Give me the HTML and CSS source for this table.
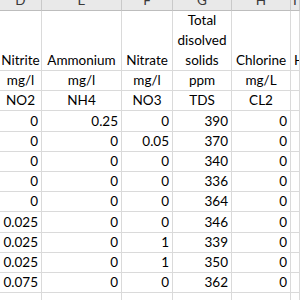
FILE: index.html
```html
<!DOCTYPE html>
<html lang="en">
<head>
    <meta charset="UTF-8">
    <meta name="viewport" content="width=device-width, initial-scale=1.0">
    <title>Water Tests</title>
    <link rel="stylesheet" href="styles.css">
</head>
<body>
    <div class="sheet">
        <!-- column letters -->
        <div class="col-head"><span>D</span></div>
        <div class="col-head"><span>E</span></div>
        <div class="col-head"><span>F</span></div>
        <div class="col-head"><span>G</span></div>
        <div class="col-head"><span>H</span></div>
        <div class="col-head"><span>I</span></div>

        <!-- titles -->
        <div class="cell title">Nitrite</div>
        <div class="cell title">Ammonium</div>
        <div class="cell title">Nitrate</div>
        <div class="cell title">Total disolved solids</div>
        <div class="cell title">Chlorine</div>
        <div class="cell title left">Hardness</div>

        <div class="cell text">mg/l</div>
        <div class="cell text">mg/l</div>
        <div class="cell text">mg/l</div>
        <div class="cell text">ppm</div>
        <div class="cell text">mg/L</div>
        <div class="cell"></div>

        <div class="cell text">NO2</div>
        <div class="cell text">NH4</div>
        <div class="cell text">NO3</div>
        <div class="cell text">TDS</div>
        <div class="cell text">CL2</div>
        <div class="cell"></div>

        <!-- readings -->
        <div class="cell num">0</div><div class="cell num">0.25</div><div class="cell num">0</div><div class="cell num">390</div><div class="cell num">0</div><div class="cell"></div>
        <div class="cell num">0</div><div class="cell num">0</div><div class="cell num">0.05</div><div class="cell num">370</div><div class="cell num">0</div><div class="cell"></div>
        <div class="cell num">0</div><div class="cell num">0</div><div class="cell num">0</div><div class="cell num">340</div><div class="cell num">0</div><div class="cell"></div>
        <div class="cell num">0</div><div class="cell num">0</div><div class="cell num">0</div><div class="cell num">336</div><div class="cell num">0</div><div class="cell"></div>
        <div class="cell num">0</div><div class="cell num">0</div><div class="cell num">0</div><div class="cell num">364</div><div class="cell num">0</div><div class="cell"></div>
        <div class="cell num">0.025</div><div class="cell num">0</div><div class="cell num">0</div><div class="cell num">346</div><div class="cell num">0</div><div class="cell"></div>
        <div class="cell num">0.025</div><div class="cell num">0</div><div class="cell num">1</div><div class="cell num">339</div><div class="cell num">0</div><div class="cell"></div>
        <div class="cell num">0.025</div><div class="cell num">0</div><div class="cell num">1</div><div class="cell num">350</div><div class="cell num">0</div><div class="cell"></div>
        <div class="cell num">0.075</div><div class="cell num">0</div><div class="cell num">0</div><div class="cell num">362</div><div class="cell num">0</div><div class="cell"></div>
        <div class="cell"></div><div class="cell"></div><div class="cell"></div><div class="cell"></div><div class="cell"></div><div class="cell"></div>
    </div>
</body>
</html>
```

FILE: styles.css
```css
body {
    margin: 0;
    padding: 0;
    background-color: #ffffff;
    font-family: Lato, "Open Sans", sans-serif;
    font-size: 13.5px;
    color: #000000;
    overflow: hidden;
}

.sheet {
    display: grid;
    grid-template-columns: 42px 80px 51px 59px 59px 1fr;
    grid-template-rows: 11px 60px;
    grid-auto-rows: 20.2px;
    width: 300px;
    height: 300px;
    overflow: hidden;
}

.col-head {
    box-sizing: border-box;
    background-color: #e9e9e9;
    border-right: 1px solid #c9c9c9;
    border-bottom: 1px solid #bdbdbd;
    color: #3a3a3a;
    text-align: center;
    overflow: hidden;
}

.col-head span {
    display: block;
    line-height: 16px;
    margin-top: -8px;
}

.cell {
    box-sizing: border-box;
    border-right: 1px solid #dadada;
    border-bottom: 1px solid #dadada;
    display: flex;
    align-items: flex-end;
    line-height: 19px;
    white-space: nowrap;
    overflow: hidden;
}

.title,
.text {
    justify-content: center;
    text-align: center;
}

.title {
    white-space: normal;
    line-height: 20px;
}

.title.left {
    justify-content: flex-start;
    text-align: left;
    padding-left: 3px;
    white-space: nowrap;
}

.num {
    justify-content: flex-end;
    padding-right: 3px;
}
```
